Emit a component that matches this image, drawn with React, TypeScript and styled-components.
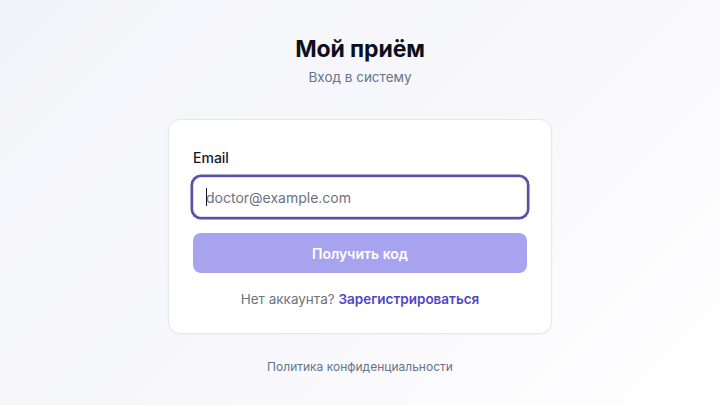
import React from 'react';
import styled, { createGlobalStyle } from 'styled-components';

/* ------------------------------ Global styles ----------------------------- */
const GlobalStyle = createGlobalStyle`
  html, body {
    margin: 0;
    padding: 0;
    height: 100%;
  }
  body {
    font-family: Inter, "Noto Sans", "Liberation Sans", sans-serif;
    background: linear-gradient(135deg, #f3f4f9 0%, #f8f8fc 55%, #ffffff 100%);
    color: #0f172a;
    -webkit-font-smoothing: antialiased;
  }
  #root {
    min-height: 100vh;
  }
`;

const Page = styled.main`
  min-height: 405px;
  display: flex;
  flex-direction: column;
  align-items: center;
  padding-top: 33px;
  box-sizing: border-box;
`;

const Title = styled.h1`
  margin: 0;
  font-size: 23px;
  line-height: 32px;
  font-weight: 700;
  color: #0b1020;
  letter-spacing: -0.1px;
`;

const Subtitle = styled.p`
  margin: 2px 0 0;
  font-size: 13.5px;
  line-height: 20px;
  color: #64748b;
`;

const Card = styled.section`
  margin-top: 32px;
  width: 384px;
  box-sizing: border-box;
  padding: 28px 24px 24px;
  background: #ffffff;
  border: 1px solid #e5e7eb;
  border-radius: 12px;
  box-shadow: 0 1px 2px rgba(15, 23, 42, 0.04);
  display: flex;
  flex-direction: column;
`;

const Label = styled.label`
  font-size: 14px;
  line-height: 20px;
  font-weight: 500;
  color: #111827;
  margin-bottom: 9px;
`;

const Field = styled.div`
  position: relative;
`;

const Input = styled.input`
  display: block;
  width: 100%;
  height: 40px;
  box-sizing: border-box;
  padding: 0 12px;
  font-family: inherit;
  font-size: 14px;
  color: #111827;
  background: #ffffff;
  border: 1px solid #dfe1ea;
  border-radius: 8px;
  outline: none;
  box-shadow: 0 0 0 2.5px #5a4fab;

  &::placeholder {
    color: #6b7280;
  }
`;

const Caret = styled.span`
  position: absolute;
  left: 13px;
  top: 11px;
  width: 1px;
  height: 18px;
  background: #111827;
`;

const SubmitButton = styled.button`
  margin-top: 16px;
  height: 40px;
  border: none;
  border-radius: 8px;
  background: #a8a3ef;
  color: #ffffff;
  font-family: inherit;
  font-size: 14px;
  font-weight: 600;
  cursor: not-allowed;
`;

const SignupRow = styled.p`
  margin: 16px 0 0;
  text-align: center;
  font-size: 13.5px;
  line-height: 20px;
  color: #6b7280;
`;

const SignupLink = styled.a`
  color: #4f45c4;
  font-weight: 600;
  text-decoration: none;
`;

const FooterLink = styled.a`
  margin-top: 24px;
  font-size: 12px;
  line-height: 18px;
  color: #64748b;
  text-decoration: none;
`;

const App = () => {
  return (
    <>
      <GlobalStyle />
      <Page>
        <Title>Мой приём</Title>
        <Subtitle>Вход в систему</Subtitle>

        <Card>
          <Label htmlFor="email">Email</Label>
          <Field>
            <Input id="email" type="email" placeholder="doctor@example.com" readOnly />
            <Caret />
          </Field>
          <SubmitButton type="button" disabled>
            Получить код
          </SubmitButton>
          <SignupRow>
            Нет аккаунта? <SignupLink href="#">Зарегистрироваться</SignupLink>
          </SignupRow>
        </Card>

        <FooterLink href="#">Политика конфиденциальности</FooterLink>
      </Page>
    </>
  );
};

export default App;
